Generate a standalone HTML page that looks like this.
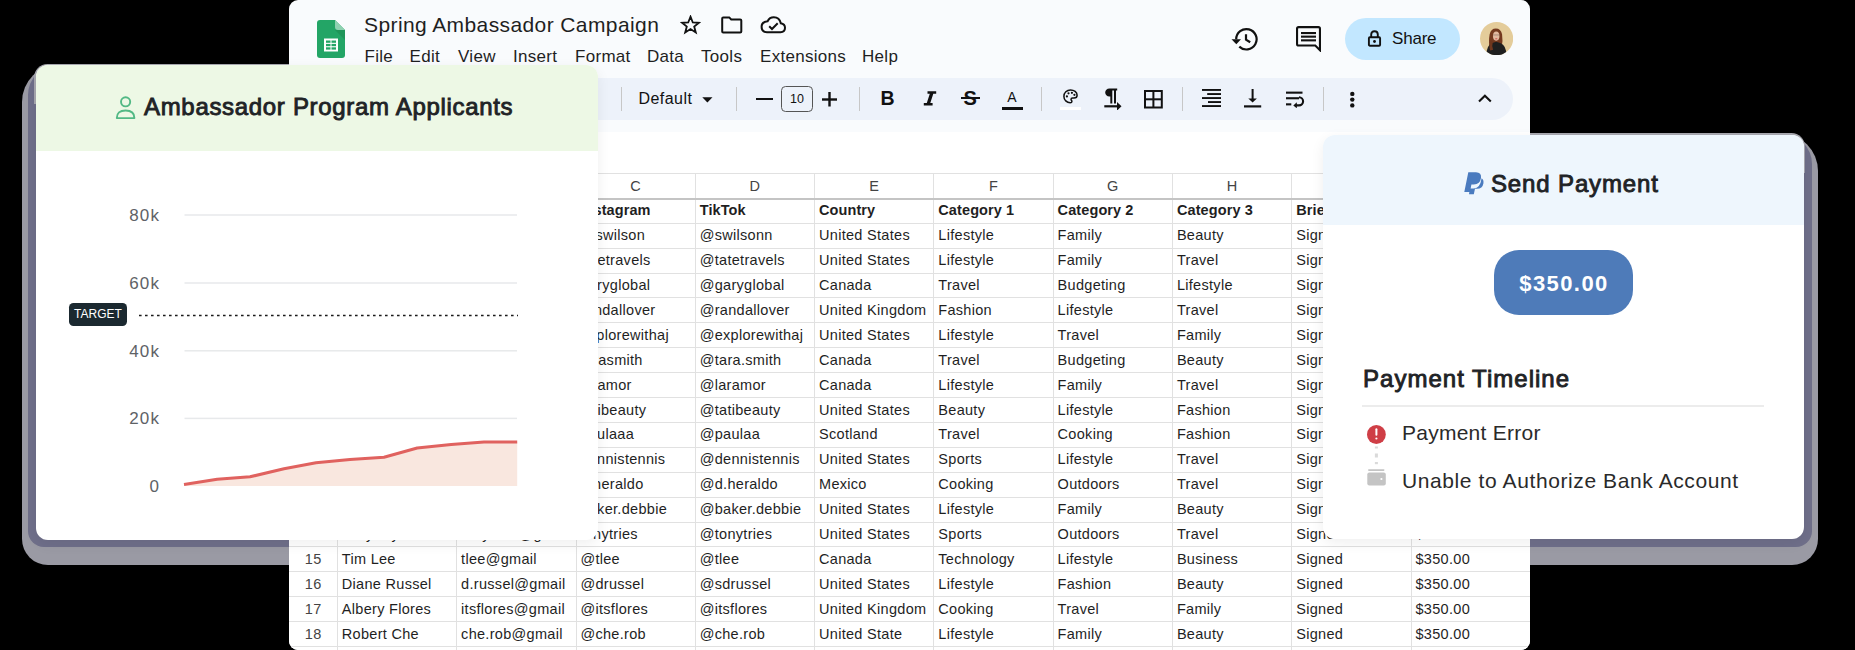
<!DOCTYPE html>
<html><head><meta charset="utf-8"><style>
*{box-sizing:border-box;margin:0;padding:0}
html,body{width:1855px;height:650px;overflow:hidden;background:#000}
body{position:relative;font-family:"Liberation Sans", sans-serif;color:#1f1f1f}
.abs{position:absolute}
.sheet{position:absolute;left:289px;top:0;width:1241px;height:650px;background:#f9fbfd;border-radius:9px;overflow:hidden}
.t{position:absolute;white-space:nowrap;font-family:"Liberation Sans", sans-serif}
.cell{position:absolute;white-space:nowrap;font-size:14.5px;letter-spacing:0.3px;color:#1f1f1f;line-height:24.9px;height:24.9px}
.hl{position:absolute;height:1px;background:#e1e1e1}
.vl{position:absolute;width:1px;background:#e1e1e1}
.menu span{position:absolute;top:0;font-size:17px;color:#1f1f1f;letter-spacing:0.2px}
.glow{position:absolute;background:#9a9aaa}
</style></head><body>

<div class="glow" style="left:22px;top:63.5px;width:590px;height:501.5px;border-radius:38px 22px 26px 26px;background:#9a9aa4"></div>
<div class="glow" style="left:27.5px;top:64.5px;width:580px;height:482.5px;border-radius:30px 16px 16px 16px;background:#6f6f8a"></div>
<div class="glow" style="left:34px;top:63.5px;width:565px;height:40px;border-radius:13.5px 13.5px 0 0;background:#a8a8b0"></div>
<div class="glow" style="left:1310px;top:133px;width:508px;height:432px;border-radius:22px 38px 26px 26px;background:#9a9aa4"></div>
<div class="glow" style="left:1315px;top:134px;width:496.5px;height:413px;border-radius:16px 30px 16px 16px;background:#6f6f8a"></div>
<div class="glow" style="left:1322px;top:133px;width:483px;height:40px;border-radius:13.5px 13.5px 0 0;background:#a8a8b0"></div>
<div class="sheet">
<div class="abs" style="left:0;top:78px;width:1223.5px;height:41.5px;background:#edf2fa;border-radius:0 21px 21px 0"></div>
<div class="abs" style="left:0;top:132px;width:1241px;height:530px;background:#fff"></div>
<div class="vl" style="left:47.9px;top:173.4px;height:476.6px"></div>
<div class="vl" style="left:167.2px;top:173.4px;height:476.6px"></div>
<div class="vl" style="left:286.5px;top:173.4px;height:476.6px"></div>
<div class="vl" style="left:405.8px;top:173.4px;height:476.6px"></div>
<div class="vl" style="left:525.1px;top:173.4px;height:476.6px"></div>
<div class="vl" style="left:644.4px;top:173.4px;height:476.6px"></div>
<div class="vl" style="left:763.7px;top:173.4px;height:476.6px"></div>
<div class="vl" style="left:883px;top:173.4px;height:476.6px"></div>
<div class="vl" style="left:1002.3px;top:173.4px;height:476.6px"></div>
<div class="vl" style="left:1121.6px;top:173.4px;height:476.6px"></div>
<div class="vl" style="left:1240.9px;top:173.4px;height:476.6px"></div>
<div class="hl" style="left:0;top:173.4px;width:1241px;background:#e1e1e1"></div>
<div class="hl" style="left:0;top:197.7px;width:1241px;height:2px;background:#c4c4c4"></div>
<div class="hl" style="left:0;top:222.7px;width:1241px"></div>
<div class="hl" style="left:0;top:247.6px;width:1241px"></div>
<div class="hl" style="left:0;top:272.5px;width:1241px"></div>
<div class="hl" style="left:0;top:297.4px;width:1241px"></div>
<div class="hl" style="left:0;top:322.3px;width:1241px"></div>
<div class="hl" style="left:0;top:347.2px;width:1241px"></div>
<div class="hl" style="left:0;top:372.1px;width:1241px"></div>
<div class="hl" style="left:0;top:397px;width:1241px"></div>
<div class="hl" style="left:0;top:421.9px;width:1241px"></div>
<div class="hl" style="left:0;top:446.8px;width:1241px"></div>
<div class="hl" style="left:0;top:471.7px;width:1241px"></div>
<div class="hl" style="left:0;top:496.6px;width:1241px"></div>
<div class="hl" style="left:0;top:521.5px;width:1241px"></div>
<div class="hl" style="left:0;top:546.4px;width:1241px"></div>
<div class="hl" style="left:0;top:571.3px;width:1241px"></div>
<div class="hl" style="left:0;top:596.2px;width:1241px"></div>
<div class="hl" style="left:0;top:621.1px;width:1241px"></div>
<div class="hl" style="left:0;top:646px;width:1241px"></div>
<div class="hl" style="left:0;top:670.9px;width:1241px"></div>
<div class="cell" style="left:48.4px;top:174.2px;width:119.3px;text-align:center;color:#444;font-size:14.5px">A</div>
<div class="cell" style="left:167.7px;top:174.2px;width:119.3px;text-align:center;color:#444;font-size:14.5px">B</div>
<div class="cell" style="left:287px;top:174.2px;width:119.3px;text-align:center;color:#444;font-size:14.5px">C</div>
<div class="cell" style="left:406.3px;top:174.2px;width:119.3px;text-align:center;color:#444;font-size:14.5px">D</div>
<div class="cell" style="left:525.6px;top:174.2px;width:119.3px;text-align:center;color:#444;font-size:14.5px">E</div>
<div class="cell" style="left:644.9px;top:174.2px;width:119.3px;text-align:center;color:#444;font-size:14.5px">F</div>
<div class="cell" style="left:764.2px;top:174.2px;width:119.3px;text-align:center;color:#444;font-size:14.5px">G</div>
<div class="cell" style="left:883.5px;top:174.2px;width:119.3px;text-align:center;color:#444;font-size:14.5px">H</div>
<div class="cell" style="left:1002.8px;top:174.2px;width:119.3px;text-align:center;color:#444;font-size:14.5px">I</div>
<div class="cell" style="left:1122.1px;top:174.2px;width:119.3px;text-align:center;color:#444;font-size:14.5px">J</div>
<div class="cell" style="left:0;top:198.3px;width:48.4px;text-align:center;color:#444">1</div>
<div class="cell" style="left:0;top:223.2px;width:48.4px;text-align:center;color:#444">2</div>
<div class="cell" style="left:0;top:248.1px;width:48.4px;text-align:center;color:#444">3</div>
<div class="cell" style="left:0;top:273px;width:48.4px;text-align:center;color:#444">4</div>
<div class="cell" style="left:0;top:297.9px;width:48.4px;text-align:center;color:#444">5</div>
<div class="cell" style="left:0;top:322.8px;width:48.4px;text-align:center;color:#444">6</div>
<div class="cell" style="left:0;top:347.7px;width:48.4px;text-align:center;color:#444">7</div>
<div class="cell" style="left:0;top:372.6px;width:48.4px;text-align:center;color:#444">8</div>
<div class="cell" style="left:0;top:397.5px;width:48.4px;text-align:center;color:#444">9</div>
<div class="cell" style="left:0;top:422.4px;width:48.4px;text-align:center;color:#444">10</div>
<div class="cell" style="left:0;top:447.3px;width:48.4px;text-align:center;color:#444">11</div>
<div class="cell" style="left:0;top:472.2px;width:48.4px;text-align:center;color:#444">12</div>
<div class="cell" style="left:0;top:497.1px;width:48.4px;text-align:center;color:#444">13</div>
<div class="cell" style="left:0;top:522px;width:48.4px;text-align:center;color:#444">14</div>
<div class="cell" style="left:0;top:546.9px;width:48.4px;text-align:center;color:#444">15</div>
<div class="cell" style="left:0;top:571.8px;width:48.4px;text-align:center;color:#444">16</div>
<div class="cell" style="left:0;top:596.7px;width:48.4px;text-align:center;color:#444">17</div>
<div class="cell" style="left:0;top:621.6px;width:48.4px;text-align:center;color:#444">18</div>
<div class="cell" style="left:52.8px;top:198.3px;font-weight:700;letter-spacing:0.1px">Name</div>
<div class="cell" style="left:172.1px;top:198.3px;font-weight:700;letter-spacing:0.1px">Email</div>
<div class="cell" style="left:291.4px;top:198.3px;font-weight:700;letter-spacing:0.1px">Instagram</div>
<div class="cell" style="left:410.7px;top:198.3px;font-weight:700;letter-spacing:0.1px">TikTok</div>
<div class="cell" style="left:530px;top:198.3px;font-weight:700;letter-spacing:0.1px">Country</div>
<div class="cell" style="left:649.3px;top:198.3px;font-weight:700;letter-spacing:0.1px">Category 1</div>
<div class="cell" style="left:768.6px;top:198.3px;font-weight:700;letter-spacing:0.1px">Category 2</div>
<div class="cell" style="left:887.9px;top:198.3px;font-weight:700;letter-spacing:0.1px">Category 3</div>
<div class="cell" style="left:1007.2px;top:198.3px;font-weight:700;letter-spacing:0.1px">Brief</div>
<div class="cell" style="left:1126.5px;top:198.3px;font-weight:700;letter-spacing:0.1px">Payment</div>
<div class="cell" style="left:52.8px;top:223.2px">Sarah Wilson</div>
<div class="cell" style="left:172.1px;top:223.2px">swilson@gmail</div>
<div class="cell" style="left:291.4px;top:223.2px">@swilson</div>
<div class="cell" style="left:410.7px;top:223.2px">@swilsonn</div>
<div class="cell" style="left:530px;top:223.2px">United States</div>
<div class="cell" style="left:649.3px;top:223.2px">Lifestyle</div>
<div class="cell" style="left:768.6px;top:223.2px">Family</div>
<div class="cell" style="left:887.9px;top:223.2px">Beauty</div>
<div class="cell" style="left:1007.2px;top:223.2px">Signed</div>
<div class="cell" style="left:1126.5px;top:223.2px">$350.00</div>
<div class="cell" style="left:52.8px;top:248.1px">Tate Jones</div>
<div class="cell" style="left:172.1px;top:248.1px">tate@gmail</div>
<div class="cell" style="left:291.4px;top:248.1px">tatetravels</div>
<div class="cell" style="left:410.7px;top:248.1px">@tatetravels</div>
<div class="cell" style="left:530px;top:248.1px">United States</div>
<div class="cell" style="left:649.3px;top:248.1px">Lifestyle</div>
<div class="cell" style="left:768.6px;top:248.1px">Family</div>
<div class="cell" style="left:887.9px;top:248.1px">Travel</div>
<div class="cell" style="left:1007.2px;top:248.1px">Signed</div>
<div class="cell" style="left:1126.5px;top:248.1px">$350.00</div>
<div class="cell" style="left:52.8px;top:273px">Gary Stone</div>
<div class="cell" style="left:172.1px;top:273px">gary@gmail</div>
<div class="cell" style="left:291.4px;top:273px">garyglobal</div>
<div class="cell" style="left:410.7px;top:273px">@garyglobal</div>
<div class="cell" style="left:530px;top:273px">Canada</div>
<div class="cell" style="left:649.3px;top:273px">Travel</div>
<div class="cell" style="left:768.6px;top:273px">Budgeting</div>
<div class="cell" style="left:887.9px;top:273px">Lifestyle</div>
<div class="cell" style="left:1007.2px;top:273px">Signed</div>
<div class="cell" style="left:1126.5px;top:273px">$350.00</div>
<div class="cell" style="left:52.8px;top:297.9px">Randall Fox</div>
<div class="cell" style="left:172.1px;top:297.9px">randall@gmail</div>
<div class="cell" style="left:291.4px;top:297.9px">randallover</div>
<div class="cell" style="left:410.7px;top:297.9px">@randallover</div>
<div class="cell" style="left:530px;top:297.9px">United Kingdom</div>
<div class="cell" style="left:649.3px;top:297.9px">Fashion</div>
<div class="cell" style="left:768.6px;top:297.9px">Lifestyle</div>
<div class="cell" style="left:887.9px;top:297.9px">Travel</div>
<div class="cell" style="left:1007.2px;top:297.9px">Signed</div>
<div class="cell" style="left:1126.5px;top:297.9px">$350.00</div>
<div class="cell" style="left:52.8px;top:322.8px">AJ Smith</div>
<div class="cell" style="left:172.1px;top:322.8px">aj@gmail</div>
<div class="cell" style="left:291.4px;top:322.8px">explorewithaj</div>
<div class="cell" style="left:410.7px;top:322.8px">@explorewithaj</div>
<div class="cell" style="left:530px;top:322.8px">United States</div>
<div class="cell" style="left:649.3px;top:322.8px">Lifestyle</div>
<div class="cell" style="left:768.6px;top:322.8px">Travel</div>
<div class="cell" style="left:887.9px;top:322.8px">Family</div>
<div class="cell" style="left:1007.2px;top:322.8px">Signed</div>
<div class="cell" style="left:1126.5px;top:322.8px">$350.00</div>
<div class="cell" style="left:52.8px;top:347.7px">Tara Smith</div>
<div class="cell" style="left:172.1px;top:347.7px">tara@gmail</div>
<div class="cell" style="left:291.4px;top:347.7px">tarasmith</div>
<div class="cell" style="left:410.7px;top:347.7px">@tara.smith</div>
<div class="cell" style="left:530px;top:347.7px">Canada</div>
<div class="cell" style="left:649.3px;top:347.7px">Travel</div>
<div class="cell" style="left:768.6px;top:347.7px">Budgeting</div>
<div class="cell" style="left:887.9px;top:347.7px">Beauty</div>
<div class="cell" style="left:1007.2px;top:347.7px">Signed</div>
<div class="cell" style="left:1126.5px;top:347.7px">$350.00</div>
<div class="cell" style="left:52.8px;top:372.6px">Lara Mor</div>
<div class="cell" style="left:172.1px;top:372.6px">lara@gmail</div>
<div class="cell" style="left:291.4px;top:372.6px">laramor</div>
<div class="cell" style="left:410.7px;top:372.6px">@laramor</div>
<div class="cell" style="left:530px;top:372.6px">Canada</div>
<div class="cell" style="left:649.3px;top:372.6px">Lifestyle</div>
<div class="cell" style="left:768.6px;top:372.6px">Family</div>
<div class="cell" style="left:887.9px;top:372.6px">Travel</div>
<div class="cell" style="left:1007.2px;top:372.6px">Signed</div>
<div class="cell" style="left:1126.5px;top:372.6px">$350.00</div>
<div class="cell" style="left:52.8px;top:397.5px">Tati Ruiz</div>
<div class="cell" style="left:172.1px;top:397.5px">tati@gmail</div>
<div class="cell" style="left:291.4px;top:397.5px">tatibeauty</div>
<div class="cell" style="left:410.7px;top:397.5px">@tatibeauty</div>
<div class="cell" style="left:530px;top:397.5px">United States</div>
<div class="cell" style="left:649.3px;top:397.5px">Beauty</div>
<div class="cell" style="left:768.6px;top:397.5px">Lifestyle</div>
<div class="cell" style="left:887.9px;top:397.5px">Fashion</div>
<div class="cell" style="left:1007.2px;top:397.5px">Signed</div>
<div class="cell" style="left:1126.5px;top:397.5px">$350.00</div>
<div class="cell" style="left:52.8px;top:422.4px">Paula Diaz</div>
<div class="cell" style="left:172.1px;top:422.4px">paula@gmail</div>
<div class="cell" style="left:291.4px;top:422.4px">paulaaa</div>
<div class="cell" style="left:410.7px;top:422.4px">@paulaa</div>
<div class="cell" style="left:530px;top:422.4px">Scotland</div>
<div class="cell" style="left:649.3px;top:422.4px">Travel</div>
<div class="cell" style="left:768.6px;top:422.4px">Cooking</div>
<div class="cell" style="left:887.9px;top:422.4px">Fashion</div>
<div class="cell" style="left:1007.2px;top:422.4px">Signed</div>
<div class="cell" style="left:1126.5px;top:422.4px">$350.00</div>
<div class="cell" style="left:52.8px;top:447.3px">Dennis Ho</div>
<div class="cell" style="left:172.1px;top:447.3px">dennis@gmail</div>
<div class="cell" style="left:291.4px;top:447.3px">dennistennis</div>
<div class="cell" style="left:410.7px;top:447.3px">@dennistennis</div>
<div class="cell" style="left:530px;top:447.3px">United States</div>
<div class="cell" style="left:649.3px;top:447.3px">Sports</div>
<div class="cell" style="left:768.6px;top:447.3px">Lifestyle</div>
<div class="cell" style="left:887.9px;top:447.3px">Travel</div>
<div class="cell" style="left:1007.2px;top:447.3px">Signed</div>
<div class="cell" style="left:1126.5px;top:447.3px">$350.00</div>
<div class="cell" style="left:52.8px;top:472.2px">Diego Heraldo</div>
<div class="cell" style="left:172.1px;top:472.2px">d.heraldo@gmail</div>
<div class="cell" style="left:291.4px;top:472.2px">d.heraldo</div>
<div class="cell" style="left:410.7px;top:472.2px">@d.heraldo</div>
<div class="cell" style="left:530px;top:472.2px">Mexico</div>
<div class="cell" style="left:649.3px;top:472.2px">Cooking</div>
<div class="cell" style="left:768.6px;top:472.2px">Outdoors</div>
<div class="cell" style="left:887.9px;top:472.2px">Travel</div>
<div class="cell" style="left:1007.2px;top:472.2px">Signed</div>
<div class="cell" style="left:1126.5px;top:472.2px">$350.00</div>
<div class="cell" style="left:52.8px;top:497.1px">Debbie Baker</div>
<div class="cell" style="left:172.1px;top:497.1px">debbie@gmail</div>
<div class="cell" style="left:291.4px;top:497.1px">baker.debbie</div>
<div class="cell" style="left:410.7px;top:497.1px">@baker.debbie</div>
<div class="cell" style="left:530px;top:497.1px">United States</div>
<div class="cell" style="left:649.3px;top:497.1px">Lifestyle</div>
<div class="cell" style="left:768.6px;top:497.1px">Family</div>
<div class="cell" style="left:887.9px;top:497.1px">Beauty</div>
<div class="cell" style="left:1007.2px;top:497.1px">Signed</div>
<div class="cell" style="left:1126.5px;top:497.1px">$350.00</div>
<div class="cell" style="left:52.8px;top:522px">Tony Tryon</div>
<div class="cell" style="left:172.1px;top:522px">tonytries@gmail</div>
<div class="cell" style="left:291.4px;top:522px">tonytries</div>
<div class="cell" style="left:410.7px;top:522px">@tonytries</div>
<div class="cell" style="left:530px;top:522px">United States</div>
<div class="cell" style="left:649.3px;top:522px">Sports</div>
<div class="cell" style="left:768.6px;top:522px">Outdoors</div>
<div class="cell" style="left:887.9px;top:522px">Travel</div>
<div class="cell" style="left:1007.2px;top:522px">Signed</div>
<div class="cell" style="left:1126.5px;top:522px">$350.00</div>
<div class="cell" style="left:52.8px;top:546.9px">Tim Lee</div>
<div class="cell" style="left:172.1px;top:546.9px">tlee@gmail</div>
<div class="cell" style="left:291.4px;top:546.9px">@tlee</div>
<div class="cell" style="left:410.7px;top:546.9px">@tlee</div>
<div class="cell" style="left:530px;top:546.9px">Canada</div>
<div class="cell" style="left:649.3px;top:546.9px">Technology</div>
<div class="cell" style="left:768.6px;top:546.9px">Lifestyle</div>
<div class="cell" style="left:887.9px;top:546.9px">Business</div>
<div class="cell" style="left:1007.2px;top:546.9px">Signed</div>
<div class="cell" style="left:1126.5px;top:546.9px">$350.00</div>
<div class="cell" style="left:52.8px;top:571.8px">Diane Russel</div>
<div class="cell" style="left:172.1px;top:571.8px">d.russel@gmail</div>
<div class="cell" style="left:291.4px;top:571.8px">@drussel</div>
<div class="cell" style="left:410.7px;top:571.8px">@sdrussel</div>
<div class="cell" style="left:530px;top:571.8px">United States</div>
<div class="cell" style="left:649.3px;top:571.8px">Lifestyle</div>
<div class="cell" style="left:768.6px;top:571.8px">Fashion</div>
<div class="cell" style="left:887.9px;top:571.8px">Beauty</div>
<div class="cell" style="left:1007.2px;top:571.8px">Signed</div>
<div class="cell" style="left:1126.5px;top:571.8px">$350.00</div>
<div class="cell" style="left:52.8px;top:596.7px">Albery Flores</div>
<div class="cell" style="left:172.1px;top:596.7px">itsflores@gmail</div>
<div class="cell" style="left:291.4px;top:596.7px">@itsflores</div>
<div class="cell" style="left:410.7px;top:596.7px">@itsflores</div>
<div class="cell" style="left:530px;top:596.7px">United Kingdom</div>
<div class="cell" style="left:649.3px;top:596.7px">Cooking</div>
<div class="cell" style="left:768.6px;top:596.7px">Travel</div>
<div class="cell" style="left:887.9px;top:596.7px">Family</div>
<div class="cell" style="left:1007.2px;top:596.7px">Signed</div>
<div class="cell" style="left:1126.5px;top:596.7px">$350.00</div>
<div class="cell" style="left:52.8px;top:621.6px">Robert Che</div>
<div class="cell" style="left:172.1px;top:621.6px">che.rob@gmail</div>
<div class="cell" style="left:291.4px;top:621.6px">@che.rob</div>
<div class="cell" style="left:410.7px;top:621.6px">@che.rob</div>
<div class="cell" style="left:530px;top:621.6px">United State</div>
<div class="cell" style="left:649.3px;top:621.6px">Lifestyle</div>
<div class="cell" style="left:768.6px;top:621.6px">Family</div>
<div class="cell" style="left:887.9px;top:621.6px">Beauty</div>
<div class="cell" style="left:1007.2px;top:621.6px">Signed</div>
<div class="cell" style="left:1126.5px;top:621.6px">$350.00</div>
<svg class="abs" style="left:28px;top:20px" width="28" height="38" viewBox="0 0 28 38">
<path d="M3 0H18L28 10V35Q28 38 25 38H3Q0 38 0 35V3Q0 0 3 0Z" fill="#23a566"/>
<path d="M18 0L28 10H21Q18 10 18 7Z" fill="#8ed1b1"/>
<path d="M18 10L28 20V10Z" fill="#1e8e54" opacity="0.7"/>
<rect x="7" y="18.5" width="14" height="13" fill="#fff"/>
<rect x="9" y="20.5" width="4.5" height="2.3" fill="#23a566"/><rect x="14.5" y="20.5" width="4.5" height="2.3" fill="#23a566"/>
<rect x="9" y="23.9" width="4.5" height="2.3" fill="#23a566"/><rect x="14.5" y="23.9" width="4.5" height="2.3" fill="#23a566"/>
<rect x="9" y="27.3" width="4.5" height="2.3" fill="#23a566"/><rect x="14.5" y="27.3" width="4.5" height="2.3" fill="#23a566"/>
</svg>
<div class="t" style="left:75px;top:10px;font-size:21px;line-height:30px;letter-spacing:0.4px;color:#1f1f1f">Spring Ambassador Campaign</div>
<div class="t" style="left:75.5px;top:44.5px;font-size:17px;line-height:24px;letter-spacing:0.3px;color:#1f1f1f">File</div>
<div class="t" style="left:120.5px;top:44.5px;font-size:17px;line-height:24px;letter-spacing:0.3px;color:#1f1f1f">Edit</div>
<div class="t" style="left:169px;top:44.5px;font-size:17px;line-height:24px;letter-spacing:0.3px;color:#1f1f1f">View</div>
<div class="t" style="left:224px;top:44.5px;font-size:17px;line-height:24px;letter-spacing:0.3px;color:#1f1f1f">Insert</div>
<div class="t" style="left:286px;top:44.5px;font-size:17px;line-height:24px;letter-spacing:0.3px;color:#1f1f1f">Format</div>
<div class="t" style="left:358px;top:44.5px;font-size:17px;line-height:24px;letter-spacing:0.3px;color:#1f1f1f">Data</div>
<div class="t" style="left:412px;top:44.5px;font-size:17px;line-height:24px;letter-spacing:0.3px;color:#1f1f1f">Tools</div>
<div class="t" style="left:471px;top:44.5px;font-size:17px;line-height:24px;letter-spacing:0.3px;color:#1f1f1f">Extensions</div>
<div class="t" style="left:573px;top:44.5px;font-size:17px;line-height:24px;letter-spacing:0.3px;color:#1f1f1f">Help</div>
<svg class="abs" style="left:391px;top:14.5px" width="21" height="20" viewBox="0 0 21 20">
<path d="M10.5 1.7L12.8 7.5L19 7.8L14.2 11.6L15.8 17.5L10.5 14.1L5.2 17.5L6.8 11.6L2 7.8L8.2 7.5Z" fill="none" stroke="#111" stroke-width="1.8" stroke-linejoin="miter"/>
</svg>
<svg class="abs" style="left:432px;top:16px" width="22" height="18" viewBox="0 0 22 18">
<path d="M2.2 1.4H8.2L10.2 3.5H19.2Q20.3 3.5 20.3 4.6V15.6Q20.3 16.6 19.2 16.6H2.2Q1.2 16.6 1.2 15.6V2.4Q1.2 1.4 2.2 1.4Z" fill="none" stroke="#111" stroke-width="2"/>
</svg>
<svg class="abs" style="left:471px;top:16px" width="27" height="18" viewBox="0 0 27 18">
<path d="M7 16.2H20.5Q25 16.2 25 11.8Q25 8 20.8 7.3Q19.5 1.3 13.8 1.3Q9.5 1.3 7.6 5.2Q1.6 5.8 1.6 10.8Q1.6 16.2 7 16.2Z" fill="none" stroke="#111" stroke-width="2"/>
<path d="M9.2 10.2L12 13L17.7 7.3" fill="none" stroke="#111" stroke-width="2"/>
</svg>
<svg class="abs" style="left:941.0999999999999px;top:26.5px" width="28" height="25" viewBox="0 0 28 25">
<path d="M6.2 12.3A10.2 10.2 0 1 1 9.3 19.6" fill="none" stroke="#111" stroke-width="2.2"/>
<path d="M1.5 12.2L6.3 17.3L11 12.2Z" fill="#111"/>
<path d="M16 7.3V12.6L20.2 15.2" fill="none" stroke="#111" stroke-width="2.2"/>
</svg>
<svg class="abs" style="left:1006px;top:26px" width="27" height="26" viewBox="0 0 27 26">
<path d="M3.6 1.15H23.4Q24.95 1.15 24.95 2.7V24.2L20.3 19.55H3.6Q2.05 19.55 2.05 18V2.7Q2.05 1.15 3.6 1.15Z" fill="none" stroke="#111" stroke-width="2.1"/>
<rect x="6" y="6" width="15" height="2.1" fill="#111"/><rect x="6" y="9.6" width="15" height="2.1" fill="#111"/><rect x="6" y="13.3" width="15" height="2.1" fill="#111"/>
</svg>
<div class="abs" style="left:1055.5px;top:18px;width:115px;height:42px;border-radius:21px;background:#c2e7ff"></div>
<svg class="abs" style="left:1078px;top:30px" width="15" height="17" viewBox="0 0 15 17">
<path d="M4.2 7V4.6Q4.2 1.3 7.5 1.3Q10.8 1.3 10.8 4.6V7" fill="none" stroke="#111" stroke-width="1.9"/>
<rect x="1.9" y="7.3" width="11.2" height="8.4" rx="1" fill="none" stroke="#111" stroke-width="1.9"/>
<circle cx="7.5" cy="11.5" r="1.4" fill="#111"/>
</svg>
<div class="t" style="left:1103px;top:26px;font-size:17px;line-height:26px;letter-spacing:-0.2px;color:#111">Share</div>
<svg class="abs" style="left:1191px;top:22.2px" width="33.2" height="33.2" viewBox="0 0 43 43">
<defs><clipPath id="av"><circle cx="21.5" cy="21.5" r="21.5"/></clipPath></defs>
<g clip-path="url(#av)">
<rect width="43" height="43" fill="#e4cc9a"/>
<path d="M13 35Q10.5 27 12.5 16Q14.2 8.5 20.5 8.5Q27 8.5 28.6 16Q30 25 28 33L21 31Z" fill="#74391f"/>
<ellipse cx="21" cy="18.3" rx="4.2" ry="6" fill="#e2b9a0"/>
<rect x="17" y="16.2" width="8.4" height="1.2" fill="#6d5e5a" opacity="0.55"/>
<rect x="19.8" y="21.4" width="2.6" height="0.9" fill="#c2202a"/>
<path d="M8 45Q8.5 30 15 27.5L21 25.5L27 27.5Q34 30 34.5 45Z" fill="#1f1f1f"/>
<path d="M13.2 37Q11 30 13.8 23.5L16.8 25Q15 31 17 36Z" fill="#6f371e"/>
</g></svg>
<div class="abs" style="left:332px;top:86.5px;width:1px;height:24.7px;background:#c7c7c7"></div>
<div class="abs" style="left:446.8px;top:86.5px;width:1px;height:24.7px;background:#c7c7c7"></div>
<div class="abs" style="left:570px;top:86.5px;width:1px;height:24.7px;background:#c7c7c7"></div>
<div class="abs" style="left:752.3px;top:86.5px;width:1px;height:24.7px;background:#c7c7c7"></div>
<div class="abs" style="left:893px;top:86.5px;width:1px;height:24.7px;background:#c7c7c7"></div>
<div class="abs" style="left:1034.2px;top:86.5px;width:1px;height:24.7px;background:#c7c7c7"></div>
<div class="t" style="left:349.5px;top:87px;font-size:16px;line-height:24px;letter-spacing:0.45px;color:#111">Default</div>
<svg class="abs" style="left:412.5px;top:96.5px" width="11" height="6" viewBox="0 0 11 6"><path d="M0.3 0.3H10.5L5.4 5.6Z" fill="#111"/></svg>
<div class="abs" style="left:467.29999999999995px;top:98.1px;width:16.8px;height:2.4px;background:#111"></div>
<div class="abs" style="left:492px;top:86.2px;width:31.8px;height:25.5px;border:1px solid #555;border-radius:4.5px"></div>
<div class="t" style="left:492px;top:87px;width:31.8px;text-align:center;font-size:12.5px;line-height:24px;color:#111">10</div>
<svg class="abs" style="left:533px;top:91.7px" width="15" height="15" viewBox="0 0 15 15"><rect x="0" y="6.3" width="15" height="2.4" fill="#111"/><rect x="6.3" y="0" width="2.4" height="14.5" fill="#111"/></svg>
<div class="t" style="left:591.5px;top:85px;font-size:19.5px;line-height:26px;font-weight:700;color:#111">B</div>
<svg class="abs" style="left:633.5px;top:90.5px" width="14" height="15" viewBox="0 0 14 15"><path d="M4.5 0.3H13.2V2.7H10.3L7.3 12H9.6V14.4H0.8V12H3.8L6.8 2.7H4.5Z" fill="#111"/></svg>
<div class="t" style="left:674.5px;top:85px;font-size:20px;line-height:26px;font-weight:700;color:#111">S</div>
<div class="abs" style="left:672px;top:97.2px;width:19px;height:1.8px;background:#111"></div>
<div class="t" style="left:718.3px;top:89px;font-size:14px;line-height:16px;color:#111">A</div>
<div class="abs" style="left:713px;top:106.7px;width:20.6px;height:3px;background:#111"></div>
<svg class="abs" style="left:773.5px;top:88.8px" width="15" height="15" viewBox="0 0 15 15"><path d="M7.5 0.9C3.8 0.9 0.9 3.9 0.9 7.4C0.9 10.8 3.8 13.8 7.2 13.8C8.4 13.8 8.9 13.2 8.9 12.4C8.9 11.4 8 11.2 8 10.4C8 9.6 8.7 9 9.5 9H11C12.9 9 14.1 7.7 14.1 6.2C14.1 3.2 11.1 0.9 7.5 0.9Z" fill="none" stroke="#111" stroke-width="1.5"/><circle cx="3.9" cy="7.4" r="1.1" fill="#111"/><circle cx="5.5" cy="4.3" r="1.1" fill="#111"/><circle cx="8.9" cy="3.8" r="1.1" fill="#111"/><circle cx="11.4" cy="5.8" r="1.1" fill="#111"/></svg>
<div class="abs" style="left:771px;top:106.7px;width:20.6px;height:3px;background:#fff"></div>
<svg class="abs" style="left:815px;top:88px" width="18" height="22" viewBox="0 0 18 22"><path d="M11.5 0.5H5.5C2.9 0.5 1.2 2.2 1.2 4.5C1.2 6.8 2.9 8.5 5.5 8.5H6.3V15.5H8.3V2.5H10V15.5H12V2.5H13.2V0.5Z" fill="#111"/><rect x="0.3" y="17.2" width="13.5" height="2.2" fill="#111"/><path d="M13 14L17.5 18.3L13 22.6Z" fill="#111"/></svg>
<svg class="abs" style="left:855px;top:89.5px" width="19" height="19" viewBox="0 0 19 19"><rect x="1" y="1" width="16.8" height="16.5" fill="none" stroke="#111" stroke-width="2"/><rect x="8.4" y="1" width="2" height="16.5" fill="#111"/><rect x="1" y="8.3" width="16.8" height="2" fill="#111"/></svg>
<svg class="abs" style="left:913px;top:89.3px" width="20" height="19" viewBox="0 0 20 19"><rect x="0" y="0" width="19" height="1.9" fill="#111"/><rect x="5.2" y="4.1" width="13.8" height="1.9" fill="#111"/><rect x="0" y="8.1" width="19" height="1.9" fill="#111"/><rect x="6" y="12.1" width="13" height="1.9" fill="#111"/><rect x="0" y="16.1" width="19" height="1.9" fill="#111"/></svg>
<svg class="abs" style="left:955px;top:89.4px" width="18" height="19" viewBox="0 0 18 19"><rect x="7.6" y="0" width="2" height="11" fill="#111"/><path d="M4.3 9.4H12.9L8.6 13.6Z" fill="#111"/><rect x="0" y="16.3" width="17.2" height="2.2" fill="#111"/></svg>
<svg class="abs" style="left:996.5px;top:91px" width="19" height="17" viewBox="0 0 19 17"><rect x="0" y="0.6" width="16.5" height="2.1" fill="#111"/><rect x="0" y="6.2" width="13" height="2.1" fill="#111"/><path d="M13 6.2A4.1 4.1 0 0 1 13 14.4H9.5" fill="none" stroke="#111" stroke-width="2.1"/><path d="M10.8 11.3L7.3 14.4L10.8 17.3Z" fill="#111"/><rect x="0" y="12.3" width="5.3" height="2.1" fill="#111"/></svg>
<svg class="abs" style="left:1059px;top:90.5px" width="9" height="18" viewBox="0 0 9 18"><circle cx="4.3" cy="2.9" r="2.2" fill="#111"/><circle cx="4.3" cy="8.6" r="2.2" fill="#111"/><circle cx="4.3" cy="14.4" r="2.2" fill="#111"/></svg>
<svg class="abs" style="left:1188.5px;top:94.3px" width="14" height="9" viewBox="0 0 14 9"><path d="M1 7.5L6.9 1.7L12.8 7.5" fill="none" stroke="#111" stroke-width="2.1"/></svg>
</div>
<div class="abs" style="left:35.5px;top:65px;width:562.5px;height:475px;background:#fff;border-radius:12px;overflow:hidden;box-shadow:0 4px 14px rgba(0,0,0,0.065)">
<div class="abs" style="left:0;top:0;width:100%;height:85.6px;background:#edf8e5"></div>
</div>
<svg class="abs" style="left:0;top:0" width="620" height="560" viewBox="0 0 620 560"><rect x="184.5" y="214.25" width="332.5" height="1.5" fill="#e7e9eb"/><rect x="184.5" y="282.25" width="332.5" height="1.5" fill="#e7e9eb"/><rect x="184.5" y="350.05" width="332.5" height="1.5" fill="#e7e9eb"/><rect x="184.5" y="417.65" width="332.5" height="1.5" fill="#e7e9eb"/><line x1="139" y1="315.5" x2="518" y2="315.5" stroke="#1b1b1b" stroke-width="1.4" stroke-dasharray="2.6 3.4"/><path d="M184 484.4L217.2 479.2L250 476.8L284 468.8L316 462.8L350 459.6L384 457.2L417.2 448L451.2 444.4L484 442L517.2 442V486H184Z" fill="#f9e7df"/><path d="M184 484.4L217.2 479.2L250 476.8L284 468.8L316 462.8L350 459.6L384 457.2L417.2 448L451.2 444.4L484 442L517.2 442" fill="none" stroke="#e0625f" stroke-width="3" stroke-linejoin="round"/></svg>
<div class="t" style="left:60px;top:203px;width:100px;text-align:right;font-size:17px;line-height:26px;letter-spacing:1.1px;color:#5e6266">80k</div>
<div class="t" style="left:60px;top:271px;width:100px;text-align:right;font-size:17px;line-height:26px;letter-spacing:1.1px;color:#5e6266">60k</div>
<div class="t" style="left:60px;top:338.5px;width:100px;text-align:right;font-size:17px;line-height:26px;letter-spacing:1.1px;color:#5e6266">40k</div>
<div class="t" style="left:60px;top:406px;width:100px;text-align:right;font-size:17px;line-height:26px;letter-spacing:1.1px;color:#5e6266">20k</div>
<div class="t" style="left:60px;top:474px;width:100px;text-align:right;font-size:17px;line-height:26px;letter-spacing:1.1px;color:#5e6266">0</div>
<div class="abs" style="left:69px;top:303px;width:58px;height:22.5px;border-radius:4.5px;background:#1b2930"></div>
<div class="t" style="left:69px;top:303px;width:58px;text-align:center;font-size:12px;line-height:23px;color:#fff">TARGET</div>
<svg class="abs" style="left:115px;top:96px" width="22" height="24" viewBox="0 0 22 24">
<circle cx="10.6" cy="5.8" r="4.6" fill="none" stroke="#52b985" stroke-width="1.9"/>
<path d="M1.8 22.1Q1.8 14.5 10.6 14.5Q19.4 14.5 19.4 22.1Z" fill="none" stroke="#52b985" stroke-width="1.9" stroke-linejoin="round"/>
</svg>
<div class="t" style="left:144px;top:92.3px;font-size:24px;line-height:30px;font-weight:400;letter-spacing:0.68px;-webkit-text-stroke:0.9px #1f2326;color:#1f2326">Ambassador Program Applicants</div>
<div class="abs" style="left:1323px;top:134.5px;width:480.5px;height:404.5px;background:#fff;border-radius:12px;overflow:hidden;box-shadow:0 4px 14px rgba(0,0,0,0.065)">
<div class="abs" style="left:0;top:0;width:100%;height:90.5px;background:#eef6fd"></div>
</div>
<div class="t" style="left:1491px;top:169.2px;font-size:24px;line-height:30px;font-weight:400;letter-spacing:0.86px;-webkit-text-stroke:0.9px #1f2326;color:#1f2326">Send Payment</div>
<div class="abs" style="left:1494px;top:250.3px;width:138.6px;height:64.3px;border-radius:25px;background:#4e7bb9"></div>
<div class="t" style="left:1494px;top:268.5px;width:138.6px;text-align:center;font-size:22px;line-height:30px;font-weight:700;letter-spacing:1.4px;text-indent:1.4px;color:#fff">$350.00</div>
<div class="t" style="left:1363px;top:364px;font-size:24px;line-height:30px;font-weight:400;letter-spacing:1.02px;-webkit-text-stroke:0.9px #1f2326;color:#1f2326">Payment Timeline</div>
<div class="abs" style="left:1362px;top:405px;width:402px;height:1.5px;background:#ececec"></div>
<div class="t" style="left:1402px;top:419px;font-size:21px;line-height:28px;letter-spacing:0.25px;color:#2a2a2a">Payment Error</div>
<div class="t" style="left:1402px;top:467px;font-size:21px;line-height:28px;letter-spacing:0.6px;color:#2a2a2a">Unable to Authorize Bank Account</div>
<svg class="abs" style="left:1463.5px;top:172px" width="20" height="23" viewBox="0 0 20 23">
<path d="M4.3 0.3H12Q17.7 0.6 17 6Q16.2 12.2 9.7 12.4H7.4L6 20H0.3Z" fill="#4a7bbf"/>
<path d="M17.6 6.2Q20 7.8 19.4 11.4Q18.5 16.6 13 16.8H11L9.8 22.2H5L5.9 16.6H9.8Q16.2 16.2 17.6 6.2Z" fill="#4a7bbf"/>
</svg>
<svg class="abs" style="left:1366px;top:424px" width="22" height="64" viewBox="0 0 22 64">
<circle cx="10.4" cy="10.5" r="9.4" fill="#cf3e46"/>
<rect x="9.4" y="4.3" width="2" height="7.5" rx="1" fill="#fff"/><circle cx="10.4" cy="14.5" r="1.1" fill="#fff"/>
<rect x="8.9" y="22.5" width="3" height="2" fill="#dadada"/><rect x="8.9" y="29.5" width="3" height="4" fill="#dadada"/><rect x="8.9" y="38" width="3" height="2.2" fill="#dadada"/>
<rect x="2" y="45.3" width="16.5" height="1.6" rx="0.8" fill="#c4c4c4"/>
<rect x="1.3" y="48.5" width="18.5" height="13" rx="2" fill="#c4c4c4"/>
<circle cx="15.4" cy="55" r="1.1" fill="#fff"/>
</svg>
</body></html>
